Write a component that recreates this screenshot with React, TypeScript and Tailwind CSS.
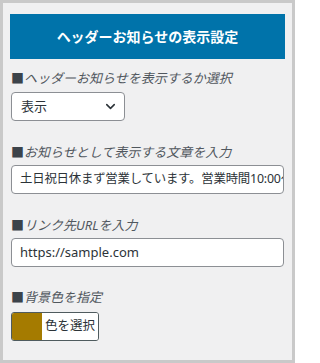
import { ChevronDown } from "lucide-react";

export default function App() {
  return (
    <div className="w-[295px] h-[363px] border-[3px] border-[#c9c9c9] bg-[#f0f0f1] px-[7px] pt-[11px] text-[#2c3338] font-['Noto_Sans','Noto_Sans_CJK_JP',sans-serif]">
      {/* Header */}
      <div className="h-[45px] bg-[#0073aa] flex items-center justify-center text-white text-[14px] font-bold">
        ヘッダーお知らせの表示設定
      </div>

      <div className="pl-px pr-[1px]">
        {/* Show / hide */}
        <div className="mt-[9px]">
          <p className="h-[20px] leading-[20px] text-[13px] italic text-[#50575e] mb-[4px]">
            <span className="not-italic text-[#3c434a]">■</span>ヘッダーお知らせを表示するか選択
          </p>
          <div className="w-[114px] h-[29px] bg-white border border-[#8c8f94] rounded-[4px] flex items-center justify-between pl-[9px] pr-[6px] text-[13px]">
            <span>表示</span>
            <ChevronDown className="w-[15px] h-[15px] text-[#2c3338]" strokeWidth={2.5} />
          </div>
        </div>

        {/* Message */}
        <div className="mt-[21px]">
          <p className="h-[20px] leading-[20px] text-[13px] italic text-[#50575e] mb-[3px]">
            <span className="not-italic text-[#3c434a]">■</span>お知らせとして表示する文章を入力
          </p>
          <div className="h-[29px] bg-white border border-[#8c8f94] rounded-[4px] flex items-center pl-[8px] text-[12.4px] tracking-[-0.2px] overflow-hidden whitespace-nowrap">
            土日祝日休まず営業しています。営業時間10:00～18:00
          </div>
        </div>

        {/* Link */}
        <div className="mt-[21px]">
          <p className="h-[20px] leading-[20px] text-[13px] italic text-[#50575e] mb-[3px]">
            <span className="not-italic text-[#3c434a]">■</span>リンク先URLを入力
          </p>
          <div className="h-[29px] bg-white border border-[#8c8f94] rounded-[4px] flex items-center pl-[8px] text-[13px] overflow-hidden whitespace-nowrap">
            https://sample.com
          </div>
        </div>

        {/* Background colour */}
        <div className="mt-[20px]">
          <p className="h-[20px] leading-[20px] text-[13px] italic text-[#50575e] mb-[5px]">
            <span className="not-italic text-[#3c434a]">■</span>背景色を指定
          </p>
          <div className="w-[88px] h-[29px] border-[1.5px] border-[#4f5b5e] rounded-[3px] flex overflow-hidden">
            <div className="w-[30px] bg-[#a57b00]" />
            <div className="flex-1 bg-white flex items-center justify-center text-[12.5px] text-[#2c3338]">
              色を選択
            </div>
          </div>
        </div>
      </div>
    </div>
  );
}
